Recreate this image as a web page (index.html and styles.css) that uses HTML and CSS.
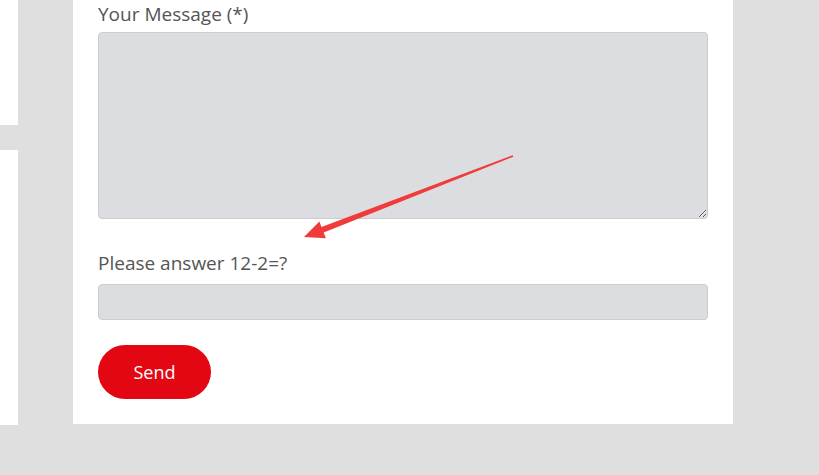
FILE: index.html
```html
<!DOCTYPE html>
<html lang="en">
<head>
<meta charset="utf-8">
<title>Contact form</title>
<link rel="stylesheet" href="styles.css">
</head>
<body>
<div class="page">
  <aside class="side">
    <div class="side-block side-top"></div>
    <div class="side-block side-bottom"></div>
  </aside>
  <main class="card">
    <form class="form">
      <label class="label" for="msg">Your Message (*)</label>
      <textarea id="msg" class="field textarea"></textarea>
      <label class="label label-q" for="ans">Please answer 12-2=?</label>
      <input id="ans" class="field input" type="text">
      <button type="button" class="send">Send</button>
    </form>
  </main>
</div>
<svg class="arrow" width="819" height="475" viewBox="0 0 819 475" aria-hidden="true">
  <polygon fill="#f13b3b" points="304,237 325.9,238.2 323.7,232.6 513.4,156.7 512.6,155.3 321.5,227 319.4,221.4"/>
</svg>
</body>
</html>
```
FILE: styles.css
```css
html, body {
  margin: 0;
  padding: 0;
}
body {
  background: #dfdfdf;
  font-family: "Open Sans", "Liberation Sans", sans-serif;
  width: 819px;
  height: 475px;
  overflow: hidden;
  position: relative;
}
.page {
  display: flex;
  align-items: flex-start;
}
.side {
  width: 18px;
  display: flex;
  flex-direction: column;
  gap: 25px;
}
.side-block {
  background: #ffffff;
}
.side-top {
  height: 125px;
}
.side-bottom {
  height: 275px;
}
.card {
  margin-left: 55px;
  width: 660px;
  box-sizing: border-box;
  background: #ffffff;
  padding: 0 25px 25px;
}
.form {
  display: flex;
  flex-direction: column;
  align-items: flex-start;
}
.label {
  display: block;
  font-size: 19px;
  line-height: 28px;
  color: #555555;
}
.label-q {
  margin-top: 30px;
}
.field {
  display: block;
  box-sizing: border-box;
  width: 610px;
  background: #dcdde0;
  border: 1px solid #cccccc;
  border-radius: 4px;
  font-family: inherit;
  font-size: 16px;
  margin: 0;
  padding: 6px 10px;
}
.textarea {
  margin-top: 4px;
  height: 187px;
  resize: vertical;
}
.input {
  margin-top: 7px;
  height: 36px;
}
.send {
  margin-top: 25px;
  width: 113px;
  height: 54px;
  border: none;
  border-radius: 27px;
  background: #e30613;
  color: #ffffff;
  font-family: inherit;
  font-size: 18px;
  cursor: pointer;
}
.arrow {
  position: absolute;
  left: 0;
  top: 0;
  pointer-events: none;
}
```
